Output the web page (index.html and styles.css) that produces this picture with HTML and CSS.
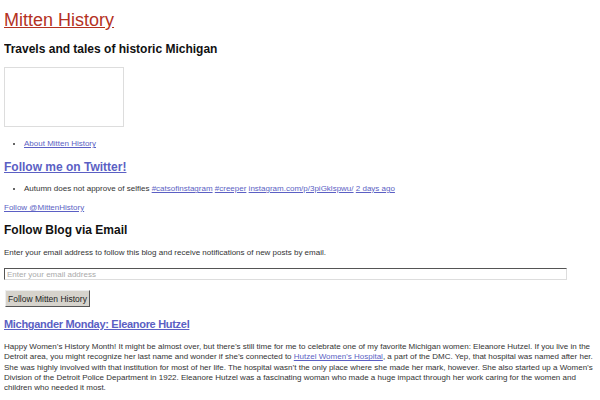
FILE: index.html
```html
<!DOCTYPE html>
<html>
<head>
    <title>Mitten History</title>
    <link rel="stylesheet" href="styles.css">
</head>
<body>
    <div class="site-header">
        <h1 class="site-title"><a href="#">Mitten History</a></h1>
        <h2 class="site-description">Travels and tales of historic Michigan</h2>
        <div class="header-image"></div>
    </div>

    <ul class="menu">
        <li><a href="#">About Mitten History</a></li>
    </ul>

    <div class="widget twitter">
        <h2 class="widget-title"><a href="#">Follow me on Twitter!</a></h2>
        <ul class="tweets">
            <li>Autumn does not approve of selfies <a href="#">#catsofinstagram</a> <a href="#">#creeper</a> <a href="#">instagram.com/p/3piGklspwu/</a> <a href="#">2 days ago</a></li>
        </ul>
        <a class="follow-link" href="#">Follow @MittenHistory</a>
    </div>

    <div class="widget subscribe">
        <h2 class="widget-title">Follow Blog via Email</h2>
        <p class="email-text">Enter your email address to follow this blog and receive notifications of new posts by email.</p>
        <form class="email-form" action="#" method="post">
            <input type="text" class="email-input" placeholder="Enter your email address">
            <input type="submit" class="email-submit" value="Follow Mitten History">
        </form>
    </div>

    <div class="post">
        <h2 class="post-title"><a href="#">Michgander Monday: Eleanore Hutzel</a></h2>
        <p class="post-excerpt">Happy Women&rsquo;s History Month! It might be almost over, but there&rsquo;s still time for me to celebrate one of my favorite Michigan women: Eleanore Hutzel. If you live in the Detroit area, you might recognize her last name and wonder if she&rsquo;s connected to <a href="#">Hutzel Women&rsquo;s Hospital</a>, a part of the DMC. Yep, that hospital was named after her. She was highly involved with that institution for most of her life. The hospital wasn&rsquo;t the only place where she made her mark, however. She also started up a Women&rsquo;s Division of the Detroit Police Department in 1922. Eleanore Hutzel was a fascinating woman who made a huge impact through her work caring for the women and children who needed it most.</p>
    </div>
</body>
</html>
```

FILE: styles.css
```css
body {
    margin: 4px;
    font-family: "Liberation Sans", Arial, sans-serif;
    font-size: 8px;
    color: #333;
    background-color: #fff;
}

a {
    color: #5b5fc4;
}

.site-title {
    margin: 5px 0 0;
    font-size: 18px;
    font-weight: normal;
    line-height: 22px;
}

.site-title a {
    color: #b4321f;
}

.site-description {
    margin: 10px 0 0;
    font-size: 12px;
    line-height: 16px;
    color: #111;
}

.header-image {
    width: 118px;
    height: 58px;
    margin-top: 10px;
    border: 1px solid #ddd;
}

.menu, .tweets {
    margin: 0;
    padding-left: 20px;
    line-height: 12px;
}

.menu {
    margin-top: 11px;
}

.tweets {
    margin-top: 8px;
}

.widget-title, .post-title {
    margin: 0;
    font-size: 12px;
    line-height: 16px;
    color: #111;
}

.twitter {
    margin-top: 9px;
}

.subscribe {
    margin-top: 8px;
}

.follow-link {
    display: block;
    margin-top: 7px;
    line-height: 12px;
}

.email-text {
    margin: 9px 0 0;
    line-height: 12px;
}

.email-input {
    display: block;
    width: 563px;
    height: 12px;
    margin: 9px 0 0;
    padding: 0 2px;
    box-sizing: border-box;
    border: 1px solid #ddd;
    border-top-color: #555;
    border-left-color: #555;
    font-family: "Liberation Sans", Arial, sans-serif;
    font-size: 8px;
}

.email-input::placeholder {
    color: #aaa;
}

.email-submit {
    display: block;
    margin: 10px 0 0 1px;
    padding: 0 2px;
    height: 17px;
    background-color: #d6d3cc;
    border: 1px solid #eee;
    border-right-color: #555;
    border-bottom-color: #555;
    font-family: "Liberation Sans", Arial, sans-serif;
    font-size: 8.5px;
    color: #222;
}

.post {
    margin-top: 9px;
}

.post-title {
    font-size: 11px;
    letter-spacing: -0.3px;
}

.post-excerpt {
    margin: 10px 0 0;
    line-height: 10.25px;
}
```
